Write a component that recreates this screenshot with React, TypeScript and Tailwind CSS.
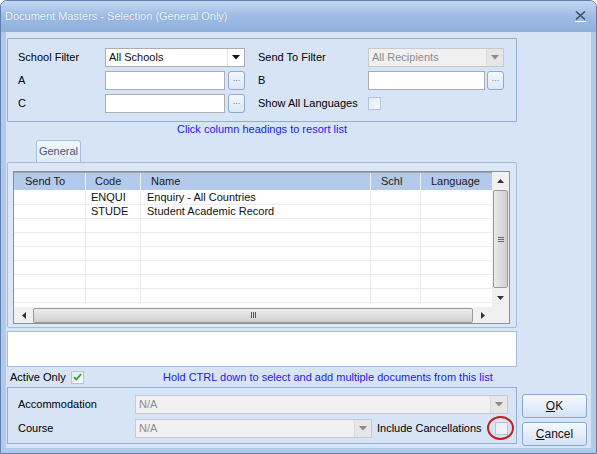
import type { ReactNode } from 'react'

const font = "font-['Liberation_Sans',Arial,sans-serif]"

function Arrow({ gray }: { gray?: boolean }) {
  return (
    <svg width="8" height="5" viewBox="0 0 8 5">
      <path d="M0 0h8L4 4.5z" fill={gray ? '#8a8a8a' : '#111'} />
    </svg>
  )
}

function Combo({ value, width, disabled }: { value: string; width: number; disabled?: boolean }) {
  return (
    <div
      style={{ width }}
      className={
        'flex h-[19px] shrink-0 items-stretch border ' +
        (disabled ? 'border-[#c5c9d0] bg-[#f0f0f0] text-[#8c8c8c]' : 'border-[#abadb3] bg-white text-[#111]')
      }
    >
      <span className="flex flex-1 items-center truncate pl-[3px]">{value}</span>
      <span
        className={
          'flex w-[17px] items-center justify-center border-l ' +
          (disabled ? 'border-[#d8dbe0] bg-[#e6e6e6]' : 'border-[#e2e4e8] bg-white')
        }
      >
        <Arrow gray={disabled} />
      </span>
    </div>
  )
}

function Ellipsis() {
  return (
    <div className="flex h-[19px] w-[17px] items-center justify-center rounded-[3px] border border-[#8fa9d3] bg-gradient-to-b from-[#f4f8fd] to-[#dce7f6] pb-[4px] text-[9px] text-[#6b7a90]">
      ...
    </div>
  )
}

function TextBox({ width }: { width: number }) {
  return <div style={{ width }} className="h-[19px] shrink-0 border border-[#abadb3] bg-white" />
}

function Check({ checked }: { checked?: boolean }) {
  return (
    <div className="flex h-[13px] w-[13px] shrink-0 items-center justify-center border border-[#b5c4d8] bg-gradient-to-br from-[#e4ebf4] to-[#f7f9fc]">
      {checked && (
        <svg width="9" height="8" viewBox="0 0 9 8">
          <path d="M1 4.2l2.3 2.3L8 1.2" stroke="#2fa23a" strokeWidth="1.8" fill="none" />
        </svg>
      )}
    </div>
  )
}

function Button({ children }: { children: ReactNode }) {
  return (
    <div className="flex h-[24px] w-[65px] items-center justify-center rounded-[3px] border border-[#8aa6d1] bg-gradient-to-b from-[#f6f9fe] via-[#e5eefa] to-[#d3e1f5] text-[12px] text-[#111]">
      {children}
    </div>
  )
}

const cols = [
  { name: 'Send To', w: 71, pad: 11 },
  { name: 'Code', w: 55, pad: 9 },
  { name: 'Name', w: 230, pad: 10 },
  { name: 'Schl', w: 50, pad: 10 },
  { name: 'Language', w: 73, pad: 10 },
]

const rows = [
  ['', 'ENQUI', 'Enquiry - All Countries', '', ''],
  ['', 'STUDE', 'Student Academic Record', '', ''],
  ['', '', '', '', ''],
  ['', '', '', '', ''],
  ['', '', '', '', ''],
  ['', '', '', '', ''],
  ['', '', '', '', ''],
  ['', '', '', '', ''],
]

function Grid() {
  return (
    <div className="flex flex-col border border-[#8a8f98] bg-white">
      <div className="flex h-[135px]">
        <div className="flex w-[478px] flex-col overflow-hidden">
          <div className="flex h-[18px] shrink-0 border-t border-[#9aa3ae] bg-[#b3caea]">
            {cols.map((c, i) => (
              <div
                key={c.name}
                style={{ width: c.w, paddingLeft: c.pad }}
                className={'flex shrink-0 items-center text-[#1a1a1a] ' + (i > 0 ? 'border-l border-[#eef3fa]' : '')}
              >
                {c.name}
              </div>
            ))}
          </div>
          <div className="mt-[1px] flex flex-col">
            {rows.map((r, ri) => (
              <div key={ri} className="flex h-[14px] shrink-0 border-b border-[#ececec]">
                {r.map((cell, ci) => (
                  <div
                    key={ci}
                    style={{ width: cols[ci].w, paddingLeft: ci === 1 ? 5 : ci === 2 ? 6 : 4 }}
                    className={'flex shrink-0 items-center leading-none text-[#111] ' + (ci > 0 ? 'border-l border-[#ececec]' : '')}
                  >
                    {cell}
                  </div>
                ))}
              </div>
            ))}
          </div>
        </div>
        {/* vertical scrollbar */}
        <div className="flex w-[17px] flex-col items-center bg-[#f0f0f0]">
          <div className="flex h-[18px] items-center justify-center">
            <svg width="7" height="4" viewBox="0 0 7 4"><path d="M0 4L3.5 0 7 4z" fill="#333" /></svg>
          </div>
          <div className="flex h-[98px] w-[15px] items-center justify-center rounded-[2px] border border-[#9a9a9a] bg-gradient-to-r from-[#eaeaea] via-[#dcdcdc] to-[#cfcfcf]">
            <div className="flex flex-col gap-[1px]">
              <div className="h-px w-[6px] bg-[#666]" />
              <div className="h-px w-[6px] bg-[#666]" />
              <div className="h-px w-[6px] bg-[#666]" />
            </div>
          </div>
          <div className="flex flex-1 items-center justify-center">
            <svg width="7" height="4" viewBox="0 0 7 4"><path d="M0 0h7L3.5 4z" fill="#333" /></svg>
          </div>
        </div>
      </div>
      {/* horizontal scrollbar */}
      <div className="flex h-[16px]">
        <div className="flex w-[478px] items-center bg-[#f0f0f0]">
          <div className="flex w-[19px] items-center justify-center">
            <svg width="4" height="7" viewBox="0 0 4 7"><path d="M4 0v7L0 3.5z" fill="#333" /></svg>
          </div>
          <div className="flex h-[15px] w-[440px] items-center justify-center rounded-[2px] border border-[#9a9a9a] bg-gradient-to-b from-[#ececec] via-[#dedede] to-[#cdcdcd]">
            <div className="flex gap-[1px]">
              <div className="h-[6px] w-px bg-[#555]" />
              <div className="h-[6px] w-px bg-[#555]" />
              <div className="h-[6px] w-px bg-[#555]" />
            </div>
          </div>
          <div className="flex flex-1 items-center justify-center">
            <svg width="4" height="7" viewBox="0 0 4 7"><path d="M0 0v7l4-3.5z" fill="#333" /></svg>
          </div>
        </div>
        <div className="w-[17px] bg-[#f0f0f0]" />
      </div>
    </div>
  )
}

export default function App() {
  return (
    <div className={`${font} h-[454px] w-[597px] overflow-hidden whitespace-nowrap text-[11px]`}>
      <div className="flex h-full flex-col rounded-t-[7px] border border-[#5d7fb2] bg-[#b3c9ea]">
        {/* title bar */}
        <div className="flex h-[31px] shrink-0 items-center justify-between rounded-t-[6px] bg-gradient-to-b from-[#c4d7f1] via-[#9ebbe3] to-[#8fb0dc] pl-[4px] pr-[9px]">
          <span className="text-[11px] text-[#f4f7fc] [text-shadow:0_0_1px_#6f8fbe]">
            Document Masters - Selection (General Only)
          </span>
          <svg width="13" height="13" viewBox="0 0 13 13">
            <path d="M2 1.5l9 8M11 1.5l-9 8" stroke="#3d4c63" strokeWidth="1.6" />
            <path d="M1 11.5h11" stroke="#ffffff" strokeWidth="1" />
          </svg>
        </div>
        {/* body */}
        <div className="mx-[5px] mb-[5px] flex flex-1 bg-[#d6e4f6] pl-[1px]">
          <div className="flex w-[510px] flex-col">
            {/* filter group */}
            <div className="mt-[6px] flex h-[84px] flex-col gap-[4px] rounded-[1px] border border-[#93acd3] pl-[10px] pt-[9px]">
              <div className="flex items-center">
                <span className="w-[87px] shrink-0">School Filter</span>
                <Combo value="All Schools" width={140} />
                <span className="ml-[13px] w-[110px] shrink-0">Send To Filter</span>
                <Combo value="All Recipients" width={136} disabled />
              </div>
              <div className="flex items-center">
                <span className="w-[87px] shrink-0">A</span>
                <TextBox width={120} />
                <div className="ml-[3px]"><Ellipsis /></div>
                <span className="ml-[13px] w-[110px] shrink-0">B</span>
                <TextBox width={117} />
                <div className="ml-[2px]"><Ellipsis /></div>
              </div>
              <div className="flex items-center">
                <span className="w-[87px] shrink-0">C</span>
                <TextBox width={120} />
                <div className="ml-[3px]"><Ellipsis /></div>
                <span className="ml-[13px] w-[110px] shrink-0">Show All Languages</span>
                <Check />
              </div>
            </div>
            <div className="h-[15px] text-center leading-[15px] text-[#1c1ce6]">Click column headings to resort list</div>
            {/* tab */}
            <div className="mt-[3px] flex pl-[29px]">
              <div className="flex h-[22px] w-[45px] items-center justify-center rounded-t-[3px] border border-b-0 border-[#a9c0e0] bg-gradient-to-b from-[#f2f7fd] to-[#dfeaf8] text-[#4a5873]">
                General
              </div>
            </div>
            <div className="flex h-[166px] flex-col rounded-[2px] border border-[#a3bde2] bg-[#dbe7f7] pl-[5px] pr-[6px] pt-[8px]">
              <Grid />
            </div>
            <div className="mt-[3px] h-[36px] border border-[#a3bde2] bg-white" />
            {/* active row */}
            <div className="flex h-[20px] items-center pl-[3px]">
              <span className="w-[61px] shrink-0">Active Only</span>
              <Check checked />
              <span className="ml-[79px] text-[#1c1ce6]">Hold CTRL down to select and add multiple documents from this list</span>
            </div>
            {/* bottom group */}
            <div className="flex h-[57px] flex-col gap-[5px] border border-[#93acd3] pl-[10px] pt-[7px]">
              <div className="flex items-center">
                <span className="w-[117px] shrink-0">Accommodation</span>
                <Combo value="N/A" width={373} disabled />
              </div>
              <div className="flex items-center">
                <span className="w-[117px] shrink-0">Course</span>
                <Combo value="N/A" width={237} disabled />
                <span className="ml-[5px] w-[118px] shrink-0">Include Cancellations</span>
                <div className="relative">
                  <Check />
                  <div className="absolute left-[-8px] top-[-6px] h-[24px] w-[27px] rounded-[50%] border-2 border-[#c41e1e]" />
                </div>
              </div>
            </div>
          </div>
          {/* buttons */}
          <div className="ml-[5px] flex flex-col justify-end gap-[4px] pb-[2px]">
            <Button><span><u>O</u>K</span></Button>
            <Button><span><u>C</u>ancel</span></Button>
          </div>
        </div>
      </div>
    </div>
  )
}
